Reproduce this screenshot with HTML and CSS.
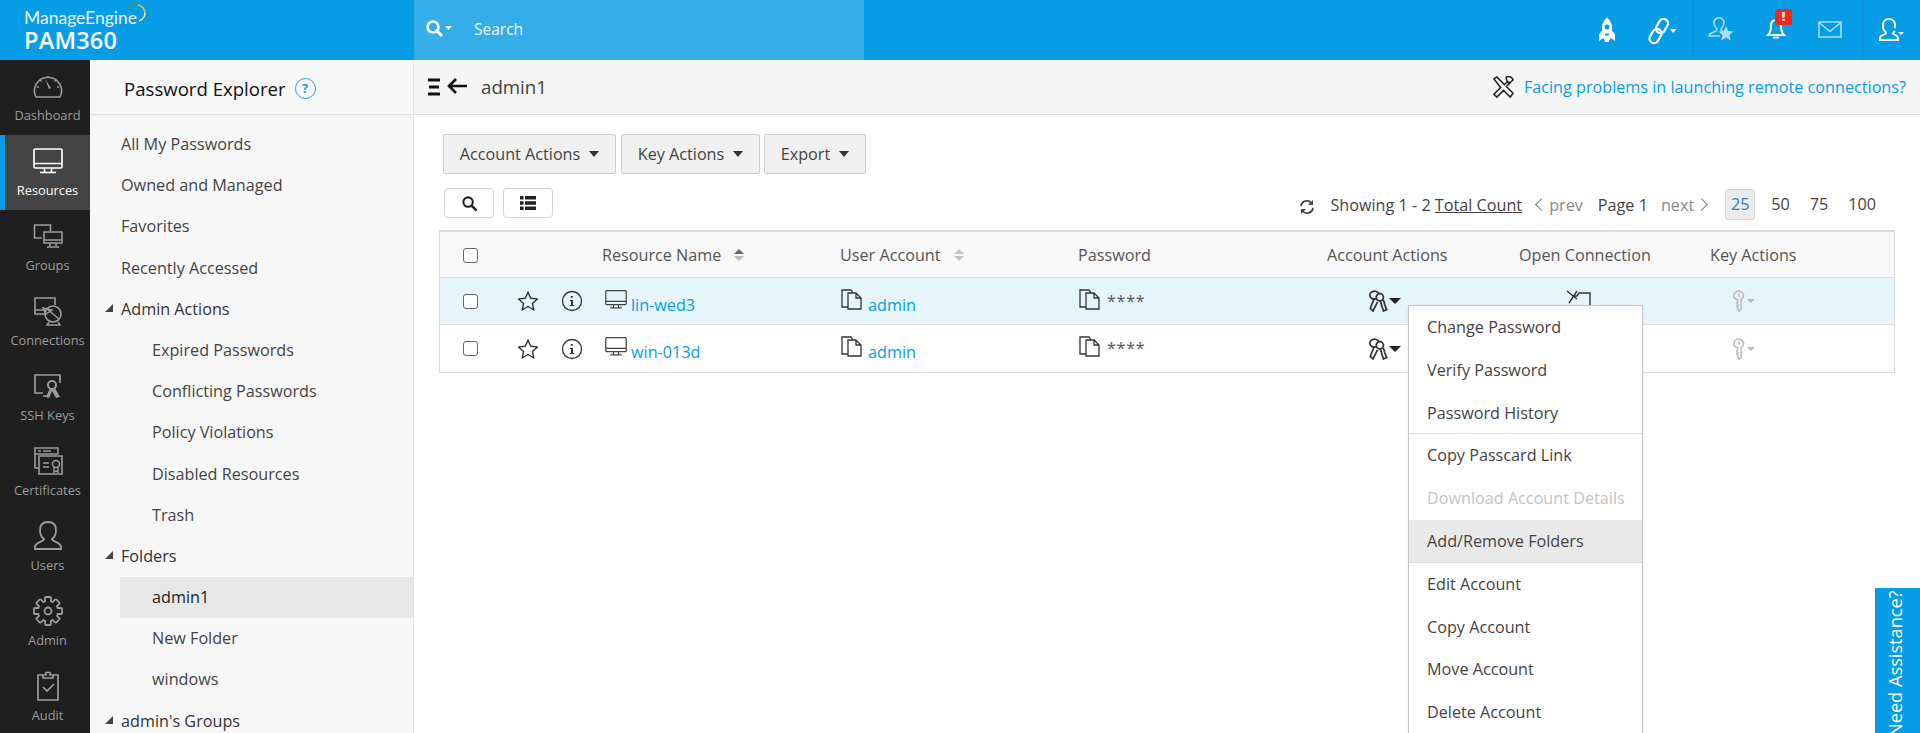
FILE: index.html
```html
<!DOCTYPE html>
<html lang="en">
<head>
<meta charset="utf-8">
<title>PAM360</title>
<link rel="stylesheet" href="styles.css">
</head>
<body>
<svg class="defs" width="0" height="0" aria-hidden="true">
  <defs>
    <symbol id="i-monitor" viewBox="0 0 30 26"><path d="M2.500 1h25a1.500 1.500 0 0 1 1.500 1.500v16a1.500 1.500 0 0 1-1.500 1.500h-25a1.500 1.500 0 0 1-1.500-1.500v-16a1.500 1.500 0 0 1 1.500-1.500zM1 15.500h28M11.500 20v4M18.500 20v4M7 24.500h16" fill="none" stroke="currentColor" stroke-width="1.700"/></symbol>
    <symbol id="i-key" viewBox="0 0 22 24"><g fill="none" stroke="currentColor" stroke-width="1.900"><path d="M9 9.500C5 11 1.500 8 2 5c.5-3 4-4.500 7-3.500 2 .7 3 2 3.500 3"/><circle cx="13" cy="8" r="4"/><path d="M7 9 2.500 20l3 3 5-10M13.500 12l3.500 11 3.500-1.500-2-5-1.500-5.500"/></g></symbol>
    <symbol id="i-copy" viewBox="0 0 22 21"><path d="M7 18H1V1h9l2 3M7 4h8l5 5v11H7zM15 4v5h5" fill="none" stroke="currentColor" stroke-width="1.300"/></symbol>
    <symbol id="i-star" viewBox="0 0 22 22"><path d="m11 2 2.700 6.200 6.800.7-5.100 4.500 1.500 6.600L11 16.500 5.100 20l1.500-6.600L1.500 8.900l6.800-.7z" fill="none" stroke="currentColor" stroke-width="1.400" stroke-linejoin="round"/></symbol>
    <symbol id="i-info" viewBox="0 0 22 22"><circle cx="11" cy="11" r="9.500" fill="none" stroke="currentColor" stroke-width="1.300"/><path d="M9.800 6h2v1.800h-2zM9 10h3v5h1.300v1H8.800v-1H10v-4H9z" fill="currentColor"/></symbol>
    <symbol id="i-keyone" viewBox="0 0 14 24"><path d="M5 1.500c3-1 7 .5 7.500 4 .3 2-1 3.500-2.500 4.500v11L8 23l-2-2 .5-2L5 17.500l1.500-1.500L5 14.500l1-1.500V10.500C3 10 1.500 8 2 5.500c.2-2 1.500-3.300 3-4zM7 3.500l1 4" fill="none" stroke="currentColor" stroke-width="1.800"/></symbol>
  </defs>
</svg>

<header class="topbar">
  <div class="logo">
    <div class="logo-me">ManageEngine<svg class="logo-arc" viewBox="0 0 20 20" width="20" height="20" aria-hidden="true"><path d="M1 4a9 9 0 0 1 10-2" fill="none" stroke="#3f9a5e" stroke-width="1.500"/><path d="M11 2a9 9 0 0 1 7 8" fill="none" stroke="#d9c64c" stroke-width="1.500"/><path d="M18 10a9 9 0 0 1-6 8" fill="none" stroke="#f4f0c0" stroke-width="1.500"/></svg></div>
    <div class="logo-pam">PAM360</div>
  </div>
  <div class="search">
    <svg class="search-ic" viewBox="0 0 28 20" width="28" height="20" aria-hidden="true"><circle cx="8" cy="8" r="5.500" fill="none" stroke="#fff" stroke-width="2.600"/><path d="m12 12 5 5" stroke="#fff" stroke-width="3"/><path d="m20 7 7 0-3.500 4z" fill="#fff"/></svg>
    <span>Search</span>
  </div>
  <div class="top-right">
    <div class="top-group">
      <svg class="ti" viewBox="0 0 20 26" width="20" height="26" aria-hidden="true"><path d="M10 .5c3.500 3 5 6.500 5 10.500 0 .8 0 1.500-.1 2.200L18 17.500V24l-3.500-2.500H13L12 25H8l-1-3.500H5.500L2 24v-6.500l3.100-4.300C5 12.500 5 11.800 5 11c0-4 1.500-7.500 5-10.500z" fill="#fff"/><circle cx="10" cy="10" r="2.500" fill="#069de6"/><path d="M8 16.500h4v2H8z" fill="#069de6"/></svg>
      <svg class="ti ti-link" viewBox="0 0 30 26" width="30" height="26" aria-hidden="true"><g fill="none" stroke="#fff" stroke-width="2.200"><rect x="10.500" y="0.500" width="9" height="15" rx="4.500" transform="rotate(30 15 8)"/><rect x="4" y="10.500" width="9" height="15" rx="4.500" transform="rotate(30 8.500 18)"/></g><path d="m23 11 6.500 0-3.250 4z" fill="#fff"/></svg>
    </div>
    <div class="top-group top-group-mid">
      <svg class="ti" viewBox="0 0 26 26" width="26" height="26" aria-hidden="true"><path d="M15 14c-1 0-2-1-2-2 2-2 3-3 3-6s-2-5-5-5-5 2-5 5 1 4 3 6c0 2-1 2-3 3-3 1-5 2-5 4h11" fill="none" stroke="#a8defa" stroke-width="1.600"/><path d="m18 9 2.200 5 5.300.5-4 3.500 1.200 5.500-4.700-3-4.700 3 1.200-5.500-4-3.500 5.300-.5z" fill="#a8defa"/></svg>
      <div class="bell">
        <svg viewBox="0 0 20 24" width="20" height="24" aria-hidden="true"><path d="M10 3c4 0 5 3 5 6 0 5 1 7 3 9H2c2-2 3-4 3-9 0-3 1-6 5-6zM7 20.500h6" fill="none" stroke="#fff" stroke-width="2"/></svg>
        <span class="badge">!</span>
      </div>
      <svg class="ti" viewBox="0 0 24 18" width="24" height="18" aria-hidden="true"><path d="M1 1h22v15H1zM1 1.500l11 9 11-9" fill="none" stroke="#a8defa" stroke-width="1.600"/></svg>
    </div>
    <div class="top-group top-group-end">
      <svg class="ti" viewBox="0 0 26 26" width="26" height="26" aria-hidden="true"><path d="M16 14c-1 1-2 1-2 2 0 2 5 2 5 5v2H1v-2c0-3 6-3 6-5 0-1-1-1-2-3-1-1-1-3-1-5 0-4 3-6 6-6s6 2 6 6c0 1 0 2-.5 3" fill="none" stroke="#fff" stroke-width="2"/><path d="m19 15 6 0-3 3z" fill="#fff"/></svg>
    </div>
  </div>
</header>

<div class="main">
  <nav class="rail">
    <a class="rail-item"><svg class="rail-ic" viewBox="0 0 30 26" aria-hidden="true"><path d="M3 24a13.500 13.500 0 1 1 24 0z" fill="none" stroke="currentColor" stroke-width="1.600"/><path d="m12 6 4 10 2-1z" fill="currentColor"/><path d="M4 14h2M24 14h2M7 7l1.500 1.500M23 7l-1.500 1.500M15 3v2" stroke="currentColor" stroke-width="1.500"/></svg><span>Dashboard</span></a>
    <a class="rail-item active"><svg class="rail-ic"><use href="#i-monitor"/></svg><span>Resources</span></a>
    <a class="rail-item"><svg class="rail-ic" viewBox="0 0 30 26" aria-hidden="true"><path d="M9 15H1.500V2h16v6M11 9h18v11H11zM11 17h18M17 20v3M23 20v3M14 24h12" fill="none" stroke="currentColor" stroke-width="1.600"/></svg><span>Groups</span></a>
    <a class="rail-item"><svg class="rail-ic" viewBox="0 0 30 30" aria-hidden="true"><path d="M12 18H2V2h20v7M2 14h10" fill="none" stroke="currentColor" stroke-width="1.600"/><circle cx="20" cy="18" r="8" fill="none" stroke="currentColor" stroke-width="1.600"/><path d="m13 12 13 11M10 12l9 2-6 4zM16 26l-2 3h13l-2-3" fill="none" stroke="currentColor" stroke-width="1.500"/></svg><span>Connections</span></a>
    <a class="rail-item"><svg class="rail-ic" viewBox="0 0 30 26" aria-hidden="true"><path d="M10 20H2V2h25v8M10 23h5" fill="none" stroke="currentColor" stroke-width="1.700"/><circle cx="19" cy="12" r="4" fill="none" stroke="currentColor" stroke-width="2"/><path d="m17 15-4 9 3 1 3-7 4 7 4-1-5-9z" fill="currentColor"/></svg><span>SSH Keys</span></a>
    <a class="rail-item"><svg class="rail-ic" viewBox="0 0 30 30" aria-hidden="true"><path d="M6 22H2V2h23v6M2 8h23M5 5h3M10 5h8M6 10h23v18H6zM10 17h6M10 21h6" fill="none" stroke="currentColor" stroke-width="1.600"/><circle cx="23" cy="18" r="3.500" fill="none" stroke="currentColor" stroke-width="1.600"/><path d="M21 21v5l2-1 2 1v-5" fill="none" stroke="currentColor" stroke-width="1.400"/></svg><span>Certificates</span></a>
    <a class="rail-item"><svg class="rail-ic" viewBox="0 0 30 30" aria-hidden="true"><path d="M19 18c0 3 9 3 9 8v2H2v-2c0-5 9-5 9-8-3-2-4-5-4-9 0-5 3-8 8-8s8 3 8 8c0 4-1 7-4 9z" fill="none" stroke="currentColor" stroke-width="1.800"/></svg><span>Users</span></a>
    <a class="rail-item"><svg class="rail-ic" viewBox="0 0 30 30" aria-hidden="true">
      <circle cx="15" cy="15" r="10" fill="#1f1f1f" stroke="currentColor" stroke-width="1.800"/>
      <g class="gear-teeth" fill="#1f1f1f" stroke="currentColor" stroke-width="1.800" stroke-linejoin="round">
        <rect x="12" y="1" width="6" height="8" rx="1"/>
        <rect x="12" y="1" width="6" height="8" rx="1" transform="rotate(45 15 15)"/>
        <rect x="12" y="1" width="6" height="8" rx="1" transform="rotate(90 15 15)"/>
        <rect x="12" y="1" width="6" height="8" rx="1" transform="rotate(135 15 15)"/>
        <rect x="12" y="1" width="6" height="8" rx="1" transform="rotate(180 15 15)"/>
        <rect x="12" y="1" width="6" height="8" rx="1" transform="rotate(225 15 15)"/>
        <rect x="12" y="1" width="6" height="8" rx="1" transform="rotate(270 15 15)"/>
        <rect x="12" y="1" width="6" height="8" rx="1" transform="rotate(315 15 15)"/>
      </g>
      <circle cx="15" cy="15" r="9.300" fill="#1f1f1f"/>
      <circle cx="15" cy="15" r="3.500" fill="none" stroke="currentColor" stroke-width="1.800"/>
    </svg><span>Admin</span></a>
    <a class="rail-item"><svg class="rail-ic" viewBox="0 0 30 30" aria-hidden="true"><path d="M10 4H5v25h20V4h-5M10 7h10V4h-3V1.500h-4V4h-3zM10 16l4 4 7-7" fill="none" stroke="currentColor" stroke-width="1.700"/></svg><span>Audit</span></a>
  </nav>

  <aside class="explorer">
    <div class="explorer-head">
      <span>Password Explorer</span>
      <span class="help">?</span>
    </div>
    <ul class="tree">
      <li class="tree-row">All My Passwords</li>
      <li class="tree-row">Owned and Managed</li>
      <li class="tree-row">Favorites</li>
      <li class="tree-row">Recently Accessed</li>
      <li class="tree-row tree-group">Admin Actions</li>
      <li class="tree-row tree-sub">Expired Passwords</li>
      <li class="tree-row tree-sub">Conflicting Passwords</li>
      <li class="tree-row tree-sub">Policy Violations</li>
      <li class="tree-row tree-sub">Disabled Resources</li>
      <li class="tree-row tree-sub">Trash</li>
      <li class="tree-row tree-group">Folders</li>
      <li class="tree-row tree-sub selected">admin1</li>
      <li class="tree-row tree-sub">New Folder</li>
      <li class="tree-row tree-sub">windows</li>
      <li class="tree-row tree-group">admin's Groups</li>
    </ul>
  </aside>

  <section class="content">
    <div class="crumb">
      <svg class="crumb-ic" viewBox="0 0 42 20" width="42" height="20" aria-hidden="true"><path d="M1 3h12M2 10h10M1 17h12" stroke="#111" stroke-width="3"/><path d="M40 9H24M29 2l-7 7 7 7" fill="none" stroke="#111" stroke-width="2.600"/></svg>
      <span class="crumb-title">admin1</span>
      <span class="crumb-help">
        <svg viewBox="0 0 24 24" width="23" height="23" aria-hidden="true"><path d="M2 3l3-2 8 8 3-3 2 2-3 3 7 7-3 4-7-7-7 7-3-3 7-7z M15 1c3-1 6 0 7 3l-3 3-3-1-1-3z" fill="none" stroke="#222" stroke-width="1.600"/></svg>
        <a class="link">Facing problems in launching remote connections?</a>
      </span>
    </div>

    <div class="toolbar">
      <button class="btn">Account Actions<i class="caret"></i></button>
      <button class="btn btn-key">Key Actions<i class="caret"></i></button>
      <button class="btn btn-export">Export<i class="caret"></i></button>
    </div>

    <div class="subbar">
      <button class="mini"><svg viewBox="0 0 18 18" width="17" height="17" aria-hidden="true"><circle cx="7.500" cy="7.500" r="5" fill="none" stroke="#222" stroke-width="2.200"/><path d="m11 11 5.500 5.500" stroke="#222" stroke-width="2.800"/></svg></button>
      <button class="mini"><svg viewBox="0 0 16 16" width="16" height="16" aria-hidden="true"><path d="M0 1h3.500v3.500H0zM5 1h11v3.500H5zM0 6.200h3.500v3.500H0zM5 6.200h11v3.500H5zM0 11.500h3.500V15H0zM5 11.500h11V15H5z" fill="#222"/></svg></button>
      <div class="pager">
        <svg class="refresh" viewBox="0 0 16 16" width="16" height="16" aria-hidden="true"><path d="M2 7a6 6 0 0 1 10.500-3M14 9a6 6 0 0 1-10.500 3" fill="none" stroke="#444" stroke-width="1.800"/><path d="M14 1v5H9zM2 15v-5h5z" fill="#444"/></svg>
        <span>Showing 1 - 2 <u>Total Count</u></span>
        <i class="chev chev-l"></i>
        <span class="muted pg-prev">prev</span>
        <span class="pg-page">Page 1</span>
        <span class="muted pg-next">next</span>
        <i class="chev chev-r"></i>
        <span class="size on">25</span>
        <span class="size">50</span>
        <span class="size">75</span>
        <span class="size">100</span>
      </div>
    </div>

    <div class="table">
      <div class="tr th">
        <span class="cb"></span><span></span><span></span>
        <span class="tc">Resource Name<i class="sort"></i></span>
        <span class="tc">User Account<i class="sort sort-light"></i></span>
        <span class="tc">Password</span>
        <span class="tc">Account Actions</span>
        <span class="tc">Open Connection</span>
        <span class="tc">Key Actions</span>
      </div>
      <div class="tr row hl">
        <span class="cb"></span>
        <svg class="ic-star"><use href="#i-star"/></svg>
        <svg class="ic-info"><use href="#i-info"/></svg>
        <span class="tc"><svg class="ic-mon"><use href="#i-monitor"/></svg><a class="link low">lin-wed3</a></span>
        <span class="tc"><svg class="ic-copy"><use href="#i-copy"/></svg><a class="link low">admin</a></span>
        <span class="tc"><svg class="ic-copy"><use href="#i-copy"/></svg><span class="stars">****</span></span>
        <span class="tc act"><svg class="ic-key"><use href="#i-key"/></svg><i class="caret dark"></i></span>
        <span class="tc conn"><svg viewBox="0 0 26 22" width="26" height="22" aria-hidden="true"><path d="M2 2l10 8M12 2 4 14M8 7h4l2-3h11v14H9" fill="none" stroke="#333" stroke-width="1.400"/></svg></span>
        <span class="tc kact"><svg class="ic-one"><use href="#i-keyone"/></svg><i class="caret pale"></i></span>
      </div>
      <div class="tr row">
        <span class="cb"></span>
        <svg class="ic-star"><use href="#i-star"/></svg>
        <svg class="ic-info"><use href="#i-info"/></svg>
        <span class="tc"><svg class="ic-mon"><use href="#i-monitor"/></svg><a class="link low">win-013d</a></span>
        <span class="tc"><svg class="ic-copy"><use href="#i-copy"/></svg><a class="link low">admin</a></span>
        <span class="tc"><svg class="ic-copy"><use href="#i-copy"/></svg><span class="stars">****</span></span>
        <span class="tc act"><svg class="ic-key"><use href="#i-key"/></svg><i class="caret dark"></i></span>
        <span class="tc conn"></span>
        <span class="tc kact"><svg class="ic-one"><use href="#i-keyone"/></svg><i class="caret pale"></i></span>
      </div>
    </div>
  </section>
</div>

<div class="menu">
  <div class="mi">Change Password</div>
  <div class="mi">Verify Password</div>
  <div class="mi sep">Password History</div>
  <div class="mi">Copy Passcard Link</div>
  <div class="mi off">Download Account Details</div>
  <div class="mi cur sep">Add/Remove Folders</div>
  <div class="mi">Edit Account</div>
  <div class="mi">Copy Account</div>
  <div class="mi">Move Account</div>
  <div class="mi">Delete Account</div>
</div>

<div class="assist">Need Assistance?</div>
</body>
</html>
```

FILE: styles.css
```css
* { box-sizing: border-box; }
html, body { margin: 0; height: 100%; overflow: hidden; }
body { font-family: "Open Sans", "Noto Sans", sans-serif; font-size: 16.200px; color: #444; background: #fff; display: flex; flex-direction: column; position: relative; }
.defs { position: absolute; }
ul { list-style: none; margin: 0; padding: 0; }
button { font-family: inherit; }
.link { color: #069de6; }

.topbar { height: 60px; flex: none; background: #069de6; display: flex; color: #fff; }
.logo { width: 414px; padding: 9px 0 0 24px; flex: none; }
.logo-me { font-family: "Lato", sans-serif; font-size: 17.500px; line-height: 17px; position: relative; color: #e8f6fe; width: max-content; }
.logo-arc { position: absolute; right: -10px; top: -6px; }
.logo-pam { font-size: 23.500px; font-weight: 600; line-height: 28px; letter-spacing: .2px; }
.search { width: 450px; flex: none; background: #34ade9; display: flex; align-items: center; padding: 0 0 2px 11px; gap: 21px; font-size: 15.500px; color: #eaf7fe; }
.top-right { flex: 1; display: flex; justify-content: flex-end; }
.top-group { display: flex; align-items: center; height: 60px; gap: 30px; padding-right: 16px; }
.top-group-mid { border-left: 1px solid #0a8fd0; border-right: 1px solid #0a8fd0; gap: 32px; padding: 0 20px 0 14px; }
.top-group-end { padding: 0 15px 0 16px; }
.ti-link { margin-top: 2px; }
.bell { position: relative; width: 20px; height: 24px; margin-top: -2px; }
.bell svg { display: block; }
.badge { position: absolute; left: 9px; top: -8px; width: 17px; height: 16px; background: #f0281e; border-radius: 2px; color: #fff; font-size: 13px; font-weight: 800; line-height: 15px; text-align: center; }

.main { flex: 1; display: flex; min-height: 0; }
.rail { width: 90px; flex: none; background: #1f1f1f; color: #9c9c9c; overflow: hidden; }
.rail-item { height: 75px; display: flex; flex-direction: column; align-items: center; justify-content: flex-end; font-size: 12.800px; line-height: 18px; padding-bottom: 11px; gap: 5px; border-left: 5px solid transparent; }
.rail-ic { width: 30px; height: 30px; }
.rail-item.active { background: #444; border-left-color: #069de6; color: #fff; }

.explorer { width: 324px; flex: none; background: #f7f7f7; border-right: 1px solid #e2e2e2; overflow: hidden; }
.explorer-head { height: 55px; border-bottom: 1px solid #dedede; padding: 2px 0 0 34px; display: flex; align-items: center; gap: 9px; font-size: 18.600px; color: #111; box-shadow: 0 1px 2px #eee; }
.help { width: 21px; height: 21px; border: 1.500px solid #1f9fe6; border-radius: 50%; color: #1f9fe6; font-size: 13px; font-weight: 700; line-height: 18px; text-align: center; }
.tree { padding-top: 9px; }
.tree-row { height: 41.200px; line-height: 41.200px; padding-left: 31px; color: #444; position: relative; }
.tree-group { font-weight: 500; color: #333; }
.tree-group::before { content: ""; position: absolute; left: 15px; top: 15px; border: 4px solid transparent; border-right-color: #444; border-bottom-color: #444; }
.tree-sub { padding-left: 62px; }
.selected { margin-left: 30px; padding-left: 32px; background: #e8e8e8; color: #222; }

.content { flex: 1; min-width: 0; }
.crumb { height: 55px; background: #f5f5f5; border-bottom: 1px solid #ddd; display: flex; align-items: center; padding: 0 14px 0 13px; }
.crumb-title { margin: -2px 0 0 12px; font-size: 18.700px; color: #444; }
.crumb-help { margin-left: auto; display: flex; align-items: center; gap: 9px; }
.toolbar { display: flex; padding: 19px 0 0 29px; }
.btn { height: 40px; width: 173px; background: #f0f0f0; border: 1px solid #cfcfcf; border-radius: 2px; color: #444; font-size: 16.200px; padding: 0; display: flex; align-items: center; justify-content: center; gap: 9px; }
.btn-key { width: 139px; margin-left: 5px; }
.btn-export { width: 102px; margin-left: 4px; }
.caret { display: inline-block; width: 0; height: 0; border: 5.500px solid transparent; border-top: 6px solid #333; border-bottom: 0; }
.caret.dark { border-top-color: #222; border-width: 6px 6px 0; }
.caret.pale { border-top-color: #b9b9b9; border-width: 4px 4px 0; }
.subbar { display: flex; align-items: center; padding: 14px 44px 0 30px; height: 44px; }
.mini { width: 50px; height: 30px; background: #fff; border: 1px solid #d4d4d4; border-radius: 4px; margin-right: 9px; padding: 0; display: flex; align-items: center; justify-content: center; }
.pager { margin: 3px 0 0 auto; display: flex; align-items: center; color: #444; }
.refresh { margin: 4px 15px 0 0; }
.muted { color: #8a8a8a; }
.chev { display: inline-block; width: 9px; height: 9px; border-left: 1px solid #777; border-bottom: 1px solid #777; }
.chev-l { transform: rotate(45deg); margin-left: 15px; }
.chev-r { transform: rotate(225deg); margin-left: 3px; }
.pg-prev { margin-left: 3px; }
.pg-page { margin-left: 15px; }
.pg-next { margin-left: 13px; }
.size { height: 31px; margin-left: 20px; line-height: 31px; text-align: center; }
.size.on { width: 30px; background: #ebebeb; border: 1px solid #d6d6d6; border-radius: 3px; color: #2a7fc4; line-height: 29px; margin-left: 19px; }
.size.on + .size { margin-left: 16px; }

.table { margin: 12px 25px 0 25px; border: 1px solid #ddd; border-top-width: 2px; }
.tr { display: grid; grid-template-columns: 78px 44px 40px 238px 238px 249px 192px 191px 1fr; align-items: center; height: 47px; border-bottom: 1px solid #ddd; }
.tr:last-child { border-bottom: 0; height: 47px; }
.th { background: #f8f8f8; height: 46px; color: #555; }
.th .cb { margin-top: 1px; }
.hl { background: #e6f4fc; }
.cb { width: 15px; height: 15px; border: 1px solid #666; border-radius: 3px; background: #fff; margin-left: 23px; }
.tc { display: flex; align-items: center; min-width: 0; white-space: nowrap; }
.sort { display: inline-flex; flex-direction: column; gap: 2px; margin-left: 13px; }
.sort::before { content: ""; border: 5px solid transparent; border-top: 0; border-bottom: 5px solid #666; }
.sort::after { content: ""; border: 5px solid transparent; border-bottom: 0; border-top: 5px solid #bbb; }
.sort-light::before { border-bottom-color: #c4c4c4; }
.sort-light::after { border-top-color: #c4c4c4; }
.ic-star { width: 22px; height: 22px; color: #333; margin-left: -1px; }
.ic-info { width: 22px; height: 22px; color: #333; margin-left: -1px; }
.ic-mon { width: 22px; height: 19px; color: #444; margin: -4px 4px 0 3px; }
.ic-copy { width: 22px; height: 21px; color: #333; margin: -4px 5px 0 1px; }
.low { margin-top: 7px; }
.stars { margin: -1px 0 0 1px; letter-spacing: .8px; font-size: 16px; color: #555; }
.act { padding-left: 41px; gap: 1px; }
.ic-key { width: 20px; height: 22px; color: #333; }
.conn { padding-left: 46px; margin-top: -2px; }
.kact { padding-left: 22px; gap: 2px; }
.ic-one { width: 13px; height: 22px; color: #bdbdbd; }

.menu { position: absolute; left: 1408px; top: 305px; width: 235px; height: 445px; background: #fff; border: 1px solid #c6c6c6; border-bottom: 0; box-shadow: 0 2px 4px rgba(0,0,0,.08); }
.mi { height: 42.800px; line-height: 42.800px; padding-left: 18px; color: #444; }
.sep { border-bottom: 1px solid #dcdcdc; }
.off { color: #c4c4c4; }
.cur { background: #e9e9e9; }
.assist { position: absolute; left: 1875px; top: 588px; width: 45px; height: 149px; padding-left: 4px; background: #069de6; color: #fff; font-size: 18.200px; overflow: hidden; writing-mode: vertical-rl; transform: rotate(180deg); line-height: 41px; white-space: nowrap; }
```
